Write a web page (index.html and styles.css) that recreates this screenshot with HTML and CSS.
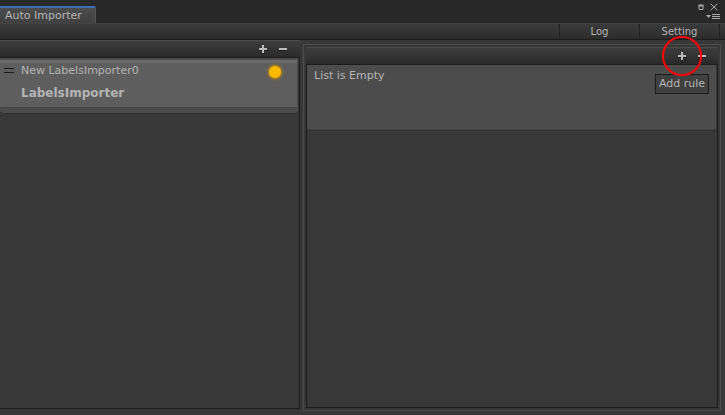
FILE: index.html
```html
<!DOCTYPE html>
<html lang="en">
<head>
<meta charset="utf-8">
<title>Auto Importer</title>
<link rel="stylesheet" href="styles.css">
</head>
<body>
<div class="window">
  <header class="titlebar">
    <h1 class="tab">Auto Importer</h1>
    <div class="window-actions">
      <div class="window-buttons">
        <button class="icon-button" aria-label="Maximize"><svg width="6" height="8" viewBox="0 0 6 8"><path d="M1 2.500h4v4h-4z" fill="none" stroke="#aaa"/><path d="M.5 2.500h5" stroke="#aaa" stroke-width="2"/></svg></button>
        <button class="icon-button" aria-label="Close"><svg width="8" height="8" viewBox="0 0 8 8"><path d="M.7 .7l6.600 6.600M7.300 .7L.7 7.300" stroke="#aaa"/></svg></button>
      </div>
      <button class="icon-button" aria-label="Menu"><svg width="14" height="6" viewBox="0 0 14 6"><path d="M0 1h5L2.500 4z" fill="#aaa"/><path d="M6 .5h8M6 2.500h8M6 4.500h8" stroke="#aaa"/></svg></button>
    </div>
  </header>
  <nav class="toolbar">
    <button class="tool">Log</button>
    <button class="tool">Setting</button>
  </nav>
  <main class="panes">
    <section class="pane importers">
      <div class="pane-head">
        <button class="icon-button" aria-label="Add importer"><svg width="8" height="9" viewBox="0 0 8 9"><path d="M0 5h8M4 1v8" stroke="#1c1c1c" stroke-width="2"/><path d="M0 4h8M4 0v8" stroke="#bbb" stroke-width="2"/></svg></button>
        <button class="icon-button" aria-label="Remove importer"><svg width="8" height="9" viewBox="0 0 8 9"><path d="M0 5h8" stroke="#1c1c1c" stroke-width="2"/><path d="M0 4h8" stroke="#bbb" stroke-width="2"/></svg></button>
      </div>
      <div class="pane-body">
        <article class="item">
          <svg class="grip" width="10" height="5" viewBox="0 0 10 5"><path d="M0 .5h10M0 4.500h10" stroke="#1a1a1a"/></svg>
          <div class="item-text">
            <p class="item-name">New LabelsImporter0</p>
            <p class="item-type">LabelsImporter</p>
          </div>
          <span class="status"></span>
        </article>
      </div>
    </section>
    <div class="rules-frame">
      <section class="pane rules">
        <div class="pane-head">
          <span class="highlight-anchor">
            <button class="icon-button" aria-label="Add rule"><svg width="8" height="9" viewBox="0 0 8 9"><path d="M0 5h8M4 1v8" stroke="#1c1c1c" stroke-width="2"/><path d="M0 4h8M4 0v8" stroke="#bbb" stroke-width="2"/></svg></button>
            <span class="ring"></span>
            <span class="tooltip">Add rule</span>
          </span>
          <button class="icon-button" aria-label="Remove rule"><svg width="8" height="9" viewBox="0 0 8 9"><path d="M0 5h8" stroke="#1c1c1c" stroke-width="2"/><path d="M0 4h8" stroke="#bbb" stroke-width="2"/></svg></button>
        </div>
        <div class="pane-body">
          <p class="empty">List is Empty</p>
        </div>
      </section>
    </div>
  </main>
</div>
</body>
</html>
```
FILE: styles.css
```css
* { box-sizing: border-box; }
body {
  margin: 0;
  background: #383838;
  color: #b4b4b4;
  font: 11px/16px "DejaVu Sans", sans-serif;
}
h1, p { margin: 0; }
button {
  margin: 0;
  padding: 0;
  border: 0;
  background: none;
  color: inherit;
  font: inherit;
}
svg { display: block; }
.window {
  display: flex;
  flex-direction: column;
  min-height: 100vh;
}
.titlebar {
  display: flex;
  justify-content: space-between;
  height: 23px;
  background: #292929;
}
.tab {
  align-self: flex-end;
  height: 17px;
  padding: 0 13px 0 5px;
  border-top: 2px solid #3d6db5;
  border-right: 1px solid #555;
  border-top-right-radius: 2px;
  background: linear-gradient(#4c4c4c, #404040);
  font-size: 11px;
  font-weight: normal;
  line-height: 15px;
}
.window-actions {
  display: flex;
  flex-direction: column;
  align-items: flex-end;
  gap: 3px;
  padding: 3px 5px 0 0;
}
.window-buttons {
  display: flex;
  gap: 6px;
  padding-right: 2px;
}
.toolbar {
  display: flex;
  justify-content: flex-end;
  height: 17px;
  padding-right: 5px;
  border-top: 1px solid #434343;
  border-bottom: 1px solid #1c1c1c;
  background: linear-gradient(#3b3b3b, #2b2b2b);
}
.tool {
  width: 80px;
  border-left: 1px solid #222;
  font-size: 10px;
  line-height: 15px;
}
.tool:last-child {
  width: 81px;
  border-right: 1px solid #222;
}
.panes {
  display: grid;
  grid-template-columns: 300fr 425fr;
  flex: 1;
}
.pane {
  display: flex;
  flex-direction: column;
}
.importers { padding-bottom: 6px; }
.pane-head {
  display: flex;
  justify-content: flex-end;
  align-items: center;
  gap: 12px;
  height: 18px;
  padding-right: 13px;
  border-top: 1px solid #4b4b4b;
  border-bottom: 1px solid #1c1c1c;
  background: linear-gradient(#3d3d3d, #2a2a2a);
}
.pane-body {
  flex: 1;
  border-right: 1px solid #1c1c1c;
  border-bottom: 1px solid #1c1c1c;
}
.item {
  display: flex;
  height: 55px;
  margin-right: 1px;
  padding: 3px 16px 0 4px;
  border: 1px solid #4c4c4c;
  border-width: 2px 1px 5px 0;
  border-radius: 0 0 3px 3px;
  background: linear-gradient(#6a6a6a 3px, #5e5e5e 3px);
  box-shadow: inset 0 -1px #454545, 0 1px #2e2e2e;
}
.grip { margin: 5px 7px 0 0; }
.item-text {
  flex: 1;
  display: grid;
  align-content: start;
  gap: 6px;
}
.item-type {
  font-size: 12px;
  font-weight: bold;
}
.status {
  width: 12px;
  height: 12px;
  margin-top: 3px;
  border-radius: 50%;
  background: #fcb900;
  box-shadow: 0 0 3px 1px #c68c12;
}
.rules-frame {
  display: flex;
  margin: 4px 4px 4px 3px;
  padding: 2px;
  border: 1px solid #4c4c4c;
}
.rules { flex: 1; }
.rules .pane-head { padding-right: 12px; }
.rules .pane-body { border-left: 1px solid #1c1c1c; }
.empty {
  height: 65px;
  margin-right: 1px;
  padding: 3px 7px;
  border-bottom: 1px solid #444;
  border-radius: 0 0 2px 2px;
  background: #4c4c4c;
  box-shadow: 0 1px #2e2e2e;
}
.highlight-anchor {
  display: flex;
  position: relative;
}
.ring {
  position: absolute;
  top: 50%;
  left: 50%;
  width: 40px;
  height: 40px;
  margin: -20px;
  border: 2px solid #f00;
  border-radius: 50%;
  pointer-events: none;
  z-index: 1;
}
.tooltip {
  position: absolute;
  top: 22px;
  left: 50%;
  transform: translateX(-50%);
  padding: 1px 3px;
  border: 1px solid #1c1c1c;
  background: #404040;
  white-space: nowrap;
}
```
